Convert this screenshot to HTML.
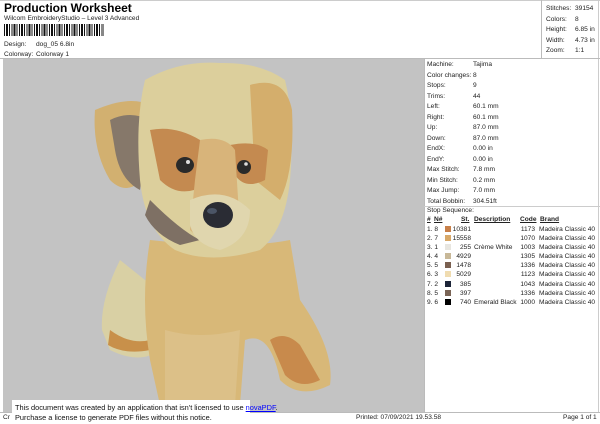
<!DOCTYPE html>
<html><head><style>
*{margin:0;padding:0}
body{width:600px;height:424px;position:relative;background:#fff;font-family:"Liberation Sans",sans-serif;font-size:6.6px;color:#222;overflow:hidden}
.a{position:absolute;white-space:nowrap}
.bar{position:absolute;top:24px;left:4px;width:100px;height:12px;background:repeating-linear-gradient(90deg,#111 0 1px,#fff 1px 2px,#111 2px 4px,#fff 4px 5px,#111 5px 6px,#fff 6px 7.5px)}
</style></head><body>
<div class="a" style="left:4px;top:1px;font-size:12px;font-weight:bold;color:#000">Production Worksheet</div>
<div class="a" style="left:4px;top:15px">Wilcom EmbroideryStudio – Level 3 Advanced</div>
<div class="bar"></div>
<div class="a" style="left:4px;top:41px">Design:</div><div class="a" style="left:36px;top:41px">dog_05 6.8in</div>
<div class="a" style="left:4px;top:51px">Colorway:</div><div class="a" style="left:36px;top:51px">Colorway 1</div>
<div class="a" style="left:0;top:0;width:600px;height:1px;background:#ccc"></div>
<div class="a" style="left:541px;top:0;width:1px;height:58px;background:#bbb"></div>
<div class="a" style="left:598px;top:0;width:1px;height:412px;background:#ccc"></div>
<div class="a" style="left:546px;top:4px;line-height:10.5px">Stitches:<br>Colors:<br>Height:<br>Width:<br>Zoom:</div>
<div class="a" style="left:575px;top:4px;line-height:10.5px">39154<br>8<br>6.85 in<br>4.73 in<br>1:1</div>
<div class="a" style="left:0;top:58px;width:600px;height:1px;background:#bbb"></div>
<div class="a" style="left:3px;top:59px;width:421px;height:353px;background:#c3c3c3"></div>
<svg class="a" style="left:0;top:0" width="600" height="424" viewBox="0 0 600 424">
<path d="M120 260 Q100 300 102 330 L110 350 Q140 365 160 350 L170 300 Z" fill="#d9d0a4"/>
<path d="M110 330 Q130 345 150 340 L150 350 Q125 355 108 345Z" fill="#c8904a"/>
<path d="M150 240 Q140 300 150 360 L160 405 Q200 410 240 405 L245 340 Q270 330 280 380 Q300 400 330 385 Q335 350 300 300 L290 240 Q240 250 150 240Z" fill="#d8b878"/>
<path d="M270 340 Q285 330 300 345 L320 380 Q300 390 285 375Z" fill="#c88a4c"/>
<path d="M165 330 Q200 340 240 330 L235 405 Q200 410 165 405Z" fill="#dcc088"/>
<path d="M95 110 Q130 95 150 105 L150 170 Q130 200 110 180 Q92 150 95 110Z" fill="#d2b070"/>
<path d="M110 120 Q130 110 150 120 L140 190 Q120 180 115 150Z" fill="#86786a"/>
<path d="M145 80 Q180 60 220 63 Q260 62 285 80 Q295 120 290 180 Q285 230 260 250 Q210 265 175 250 Q145 230 140 180 Q135 120 145 80Z" fill="#dccf9c"/>
<path d="M250 85 Q285 75 292 110 Q295 170 280 200 L255 180 Z" fill="#d4ae6c"/>
<path d="M150 130 Q175 125 200 140 L205 185 Q180 200 160 180Z" fill="#c48a50"/>
<path d="M230 145 Q255 140 268 150 L265 180 Q245 190 235 175Z" fill="#c48a50"/>
<path d="M200 140 Q225 135 235 150 L240 230 Q210 250 190 230 L195 180Z" fill="#d8b47a"/>
<path d="M150 200 Q180 230 200 240 L180 245 Q155 235 145 215Z" fill="#7e7064"/>
<path d="M190 200 Q225 185 250 210 Q250 240 220 250 Q195 245 190 225Z" fill="#e0d6ae"/>
<ellipse cx="185" cy="165" rx="9" ry="8" fill="#2a2a2a"/><circle cx="188" cy="162" r="2" fill="#ddd"/>
<ellipse cx="244" cy="167" rx="7" ry="7" fill="#2a2a2a"/><circle cx="246" cy="164" r="1.8" fill="#ddd"/>
<ellipse cx="218" cy="215" rx="15" ry="13" fill="#2a2c34"/><ellipse cx="212" cy="211" rx="5" ry="3" fill="#4b5566"/>
</svg>
<div class="a" style="left:424px;top:59px;width:1px;height:353px;background:#bbb"></div>
<div class="a" style="left:427px;top:60px;line-height:10.5px">Machine:<br>Color changes:<br>Stops:<br>Trims:<br>Left:<br>Right:<br>Up:<br>Down:<br>EndX:<br>EndY:<br>Max Stitch:<br>Min Stitch:<br>Max Jump:<br>Total Bobbin:</div>
<div class="a" style="left:473px;top:60px;line-height:10.5px">Tajima<br>8<br>9<br>44<br>60.1 mm<br>60.1 mm<br>87.0 mm<br>87.0 mm<br>0.00 in<br>0.00 in<br>7.8 mm<br>0.2 mm<br>7.0 mm<br>304.51ft</div>
<div class="a" style="left:424px;top:206px;width:176px;height:1px;background:#ccc"></div>
<div class="a" style="left:427px;top:207px">Stop Sequence:</div>
<div class="a" style="left:427px;top:216px;font-weight:bold;text-decoration:underline">#</div>
<div class="a" style="left:434px;top:216px;font-weight:bold;text-decoration:underline">N#</div>
<div class="a" style="left:461px;top:216px;font-weight:bold;text-decoration:underline">St.</div>
<div class="a" style="left:474px;top:216px;font-weight:bold;text-decoration:underline">Description</div>
<div class="a" style="left:520px;top:216px;font-weight:bold;text-decoration:underline">Code</div>
<div class="a" style="left:540px;top:216px;font-weight:bold;text-decoration:underline">Brand</div>
<div class="a" style="left:427px;top:225px;line-height:9.1px">1. 8<br>2. 7<br>3. 1<br>4. 4<br>5. 5<br>6. 3<br>7. 2<br>8. 5<br>9. 6</div>
<div class="a" style="left:445px;top:226px;width:6px;line-height:9.1px">
<div style="height:9.1px"><div style="width:6px;height:6px;background:#c8804a"></div></div>
<div style="height:9.1px"><div style="width:6px;height:6px;background:#d8a868"></div></div>
<div style="height:9.1px"><div style="width:6px;height:6px;background:#e8e6e0"></div></div>
<div style="height:9.1px"><div style="width:6px;height:6px;background:#c8b898"></div></div>
<div style="height:9.1px"><div style="width:6px;height:6px;background:#7a6050"></div></div>
<div style="height:9.1px"><div style="width:6px;height:6px;background:#f0dcb0"></div></div>
<div style="height:9.1px"><div style="width:6px;height:6px;background:#1c2438"></div></div>
<div style="height:9.1px"><div style="width:6px;height:6px;background:#7a6456"></div></div>
<div style="height:9.1px"><div style="width:6px;height:6px;background:#000"></div></div>
</div>
<div class="a" style="left:451px;top:225px;width:20px;text-align:right;line-height:9.1px">10381<br>15558<br>255<br>4929<br>1478<br>5029<br>385<br>397<br>740</div>
<div class="a" style="left:474px;top:225px;line-height:9.1px"><br><br>Crème White<br><br><br><br><br><br>Emerald Black</div>
<div class="a" style="left:518px;top:225px;width:17px;text-align:right;line-height:9.1px">1173<br>1070<br>1003<br>1305<br>1336<br>1123<br>1043<br>1336<br>1000</div>
<div class="a" style="left:539px;top:225px;line-height:9.1px">Madeira Classic 40<br>Madeira Classic 40<br>Madeira Classic 40<br>Madeira Classic 40<br>Madeira Classic 40<br>Madeira Classic 40<br>Madeira Classic 40<br>Madeira Classic 40<br>Madeira Classic 40</div>
<div class="a" style="left:0;top:412px;width:600px;height:1px;background:#bbb"></div>
<div class="a" style="left:3px;top:414px">Cr</div>
<div class="a" style="left:356px;top:414px">Printed: 07/09/2021 19.53.58</div>
<div class="a" style="left:563px;top:414px">Page 1 of 1</div>
<div class="a" style="left:12px;top:400px;width:238px;height:24px;background:#fff"></div>
<div class="a" style="left:15px;top:403px;font-size:7.4px;line-height:10px;color:#111">This document was created by an application that isn't licensed to use <span style="color:#00f;text-decoration:underline">novaPDF</span>.<br>Purchase a license to generate PDF files without this notice.</div>
</body></html>
